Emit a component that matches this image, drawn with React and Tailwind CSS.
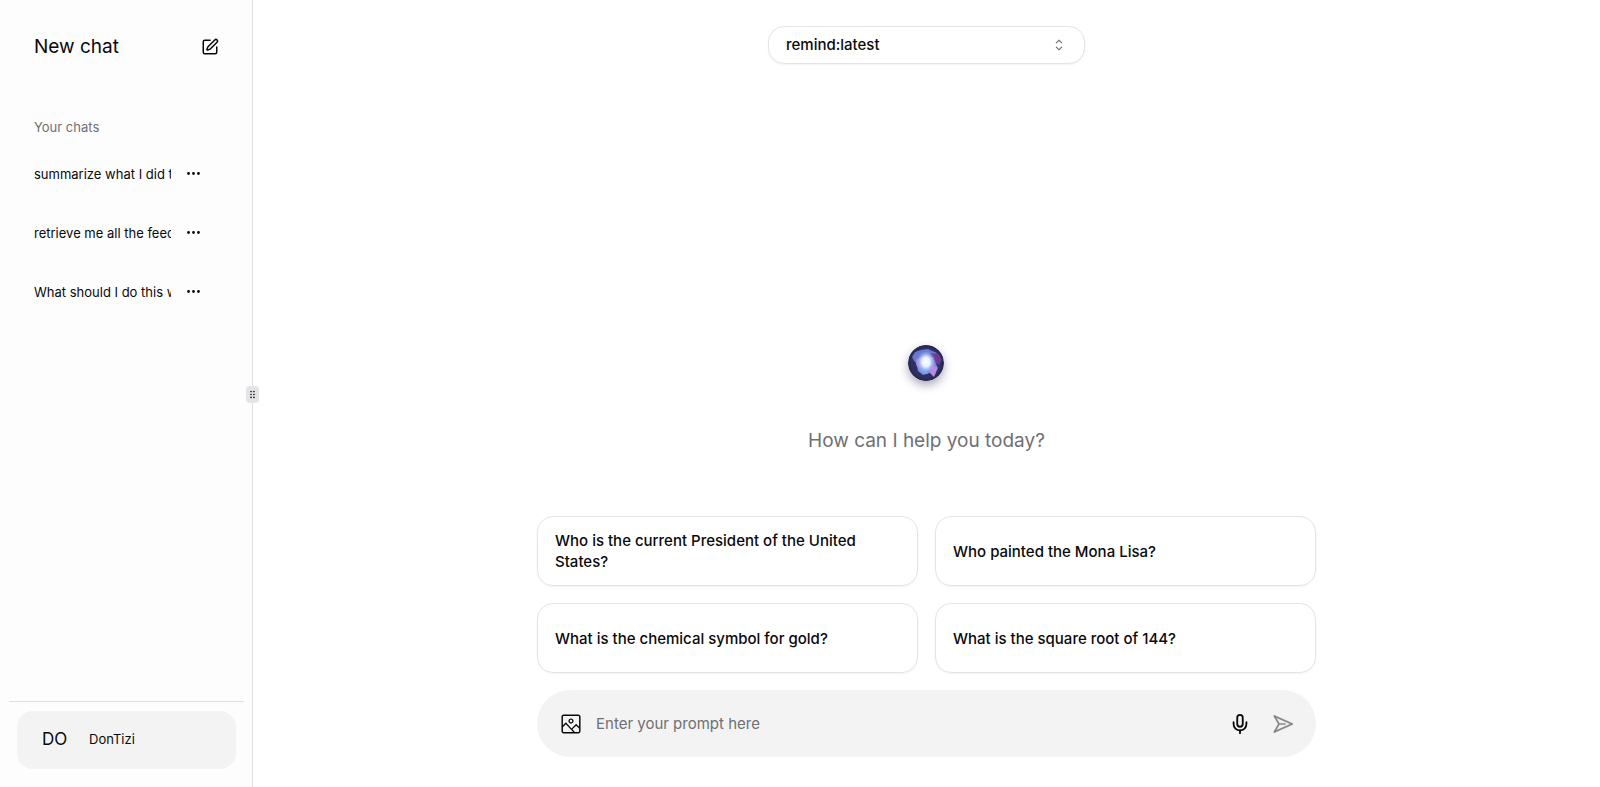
import { useState } from 'react';
import { Ellipsis, Mic, SquarePen } from 'lucide-react';
import { RxCaretSort, RxDragHandleDots2, RxImage, RxPaperPlane } from 'react-icons/rx';

const chats = [
  { id: 1, title: 'summarize what I did today' },
  { id: 2, title: 'retrieve me all the feedback' },
  { id: 3, title: 'What should I do this week?' },
];

const suggestions = [
  'Who is the current President of the United States?',
  'Who painted the Mona Lisa?',
  'What is the chemical symbol for gold?',
  'What is the square root of 144?',
];

function Sidebar() {
  return (
    <aside className="flex w-[253px] shrink-0 flex-col border-r border-[#e0e0e3] bg-[#fdfdfd]">
      <a href="#new" className="mt-7 flex h-[38px] items-center justify-between pr-[33px] pl-[34px]">
        <span className="text-[19px]">New chat</span>
        <SquarePen className="h-[18px] w-[18px]" strokeWidth={2} />
      </a>

      <p className="mt-[51px] pl-[34px] text-[13px] leading-5 text-[#6f6f74]">Your chats</p>

      <nav className="mt-[7px] flex flex-col">
        {chats.map((chat) => (
          <div key={chat.id} className="flex h-[59px] items-center pl-[34px]">
            <a
              href={`#chat-${chat.id}`}
              className="w-[137px] overflow-hidden text-[13px] leading-5 whitespace-nowrap"
            >
              {chat.title}
            </a>
            <button type="button" aria-label="Chat options" className="ml-[14px]">
              <Ellipsis className="h-[17px] w-[17px]" />
            </button>
          </div>
        ))}
      </nav>

      {/* User */}
      <div className="mt-auto mr-2 ml-[9px] border-t border-[#e0e0e3] px-2 pt-[9px] pb-[18px]">
        <button
          type="button"
          className="flex h-[58px] w-full items-center rounded-2xl bg-[#f3f3f3] text-left"
        >
          <span className="w-[72px] pl-[25px] text-[17px]">DO</span>
          <span className="text-[13px]">DonTizi</span>
        </button>
      </div>
    </aside>
  );
}

function Orb() {
  return (
    <svg
      viewBox="0 0 36 36"
      className="h-9 w-9 rounded-full shadow-[0_4px_10px_rgba(40,35,90,0.4)]"
      aria-hidden="true"
    >
      <defs>
        <clipPath id="orb-clip">
          <circle cx="18" cy="18" r="18" />
        </clipPath>
        <radialGradient id="orb-core">
          <stop offset="0" stopColor="#fff" />
          <stop offset="0.4" stopColor="#e6f2ff" />
          <stop offset="0.7" stopColor="#a9c0f7" stopOpacity="0.6" />
          <stop offset="1" stopColor="#7a8ce8" stopOpacity="0" />
        </radialGradient>
        <radialGradient id="orb-rim">
          <stop offset="0.8" stopColor="#1d2147" stopOpacity="0" />
          <stop offset="1" stopColor="#1a1e3c" stopOpacity="0.6" />
        </radialGradient>
        <filter id="orb-soft">
          <feGaussianBlur stdDeviation="0.7" />
        </filter>
      </defs>
      <g clipPath="url(#orb-clip)">
        <rect width="36" height="36" fill="#2d3060" />
        <g filter="url(#orb-soft)">
          <path d="M4 12 L7 7 L13 5 L20 4 L29 8 L25 17 L10 20 L6 16Z" fill="#6878cc" />
          <path d="M22 8 L31 9 L34 14 L31 20 L25 17Z" fill="#6d3a96" />
          <path d="M8 17 L14 11 L25 12 L28 19 L30 23 L26 32 L22 28 L15 30 L10 26Z" fill="#8784df" />
          <path d="M8 14 L15 12 L13 25 L8 20Z" fill="#b692e8" opacity="0.7" />
          <path d="M25 20 L29 23 L26 32 L22 27Z" fill="#b98ade" />
          <path d="M10 22 L18 25 L20 29 L14 28Z" fill="#62a8ee" />
        </g>
        <ellipse cx="18" cy="17" rx="10" ry="12" fill="url(#orb-core)" />
        <circle cx="18" cy="18" r="18" fill="url(#orb-rim)" />
      </g>
    </svg>
  );
}

export default function App() {
  const [prompt, setPrompt] = useState('');

  return (
    <div className="flex min-h-screen bg-white font-[Inter,sans-serif] text-[#09090b]">
      <Sidebar />

      {/* Resize handle sits on top of the sidebar border */}
      <div className="relative w-0 self-center">
        <button
          type="button"
          aria-label="Resize sidebar"
          className="absolute -top-2 -left-[7px] flex h-[17px] w-[13px] items-center justify-center rounded bg-[#e4e4e7]"
        >
          <RxDragHandleDots2 className="h-[11px] w-[11px] shrink-0" />
        </button>
      </div>

      <main className="flex min-w-0 flex-1 flex-col items-center px-4">
        <div className="relative mt-[26px] w-full max-w-[317px]">
          <select
            aria-label="Model"
            className="h-[38px] w-full appearance-none rounded-2xl border border-[#e4e4e7] bg-white px-[17px] text-[15px] font-medium shadow-xs"
          >
            <option>remind:latest</option>
          </select>
          <RxCaretSort className="pointer-events-none absolute top-[10px] right-[17px] h-[18px] w-[18px] text-[#6f6f74]" />
        </div>

        <div className="flex flex-1 flex-col items-center justify-end pb-[61px]">
          <Orb />
          <h1 className="mt-[46px] text-[19px] leading-7 text-[#6f6f74]">How can I help you today?</h1>
        </div>

        <div className="w-full max-w-[779px] pb-[30px]">
          <div className="grid grid-cols-2 gap-[17px]">
            {suggestions.map((text) => (
              <button
                key={text}
                type="button"
                onClick={() => setPrompt(text)}
                className="h-[70px] rounded-2xl border border-[#e4e4e7] px-[17px] text-left text-[15px] leading-[21px] font-medium shadow-xs"
              >
                {text}
              </button>
            ))}
          </div>

          <form
            onSubmit={(e) => e.preventDefault()}
            className="mt-[17px] flex h-[67px] items-center rounded-full bg-[#f3f3f3] pr-[23px] pl-[23px]"
          >
            <button type="button" aria-label="Attach image">
              <RxImage className="h-[22px] w-[22px]" />
            </button>
            <input
              type="text"
              aria-label="Prompt"
              placeholder="Enter your prompt here"
              value={prompt}
              onChange={(e) => setPrompt(e.target.value)}
              className="ml-[14px] h-6 min-w-0 flex-1 bg-transparent text-[15px] outline-none placeholder:text-[#6f6f74]"
            />
            <button type="button" aria-label="Record voice">
              <Mic className="h-[22px] w-[22px]" />
            </button>
            <button type="submit" aria-label="Send" className="ml-[22px] text-[#7f7f82]">
              <RxPaperPlane className="h-5 w-5 stroke-current [stroke-width:0.3]" />
            </button>
          </form>
        </div>
      </main>
    </div>
  );
}
